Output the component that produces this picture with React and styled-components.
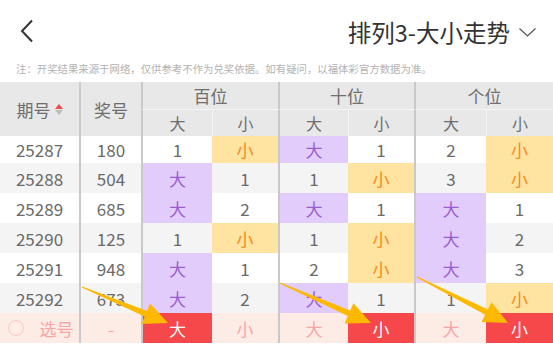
import React from 'react';
import styled, { createGlobalStyle } from 'styled-components';

const GlobalStyle = createGlobalStyle`
  html, body {
    margin: 0;
    padding: 0;
    background: #fff;
  }
  body {
    font-family: 'Noto Sans CJK SC', 'Noto Sans', sans-serif;
    overflow: hidden;
  }
`;

const colors = {
  purpleBg: '#e2ccfb',
  purpleText: '#9a5ccf',
  orangeBg: '#fee4a0',
  orangeText: '#f88a1e',
  redBg: '#f6474b',
  pickBg: '#fdebe6',
  pickText: '#f8a6a4',
  headerBg: '#e8e8e8',
  groupLine: '#c9c9c9',
};

const rows = [
  { no: '25287', num: '180' },
  { no: '25288', num: '504' },
  { no: '25289', num: '685' },
  { no: '25290', num: '125' },
  { no: '25291', num: '948' },
  { no: '25292', num: '673' },
];

// omission counters, precomputed from the draw history
const misses = [
  [[1, null], [null, 1], [2, null]],
  [[null, 1], [1, null], [3, null]],
  [[null, 2], [null, 1], [null, 1]],
  [[1, null], [1, null], [null, 2]],
  [[null, 1], [2, null], [null, 3]],
  [[null, 2], [null, 1], [1, null]],
];

const picks = ['big', 'small', 'small'];

const Page = styled.div`
  width: 553px;
  height: 346px;
  position: relative;
  overflow: hidden;
`;

const NavBar = styled.div`
  height: 56px;
  display: flex;
  align-items: center;
  justify-content: space-between;
  padding: 0 17px 0 20px;
  box-sizing: border-box;
`;

const BackButton = styled.div`
  width: 18px;
  height: 26px;
  display: flex;
  align-items: center;
  margin-top: 5px;
`;

const Title = styled.div`
  display: flex;
  align-items: center;
  gap: 9px;
  font-size: 23.5px;
  color: #333;
  margin-top: 8px;
`;

const Note = styled.div`
  font-size: 10.4px;
  color: #b3b3b3;
  padding-left: 16px;
  height: 26px;
  line-height: 26px;
  white-space: nowrap;
`;

const Table = styled.div`
  display: grid;
  grid-template-columns: 79px 62px 71px 66px 70px 66px 72px 67px;
  grid-template-rows: 28px 26px 27px repeat(6, 30px);
  position: relative;
`;

const HeadCell = styled.div`
  background: ${colors.headerBg};
  color: #6e6e6e;
  font-size: ${p => (p.$sub ? '16px' : '17px')};
  display: flex;
  align-items: center;
  justify-content: center;
  box-sizing: border-box;
  grid-row: ${p => p.$row || 'auto'};
  grid-column: ${p => p.$col || 'auto'};
  border-left: ${p => (p.$group ? `2px solid ${colors.groupLine}` : p.$thin ? '1px solid #f4f4f4' : 'none')};
  border-bottom: ${p => (p.$top ? '1px solid #f4f4f4' : 'none')};
`;

const Cell = styled.div`
  display: flex;
  align-items: center;
  justify-content: center;
  box-sizing: border-box;
  font-size: 17px;
  color: ${p => p.$fg || '#6a6a6a'};
  background: ${p => p.$bg || (p.$odd ? '#f4f4f4' : '#fff')};
  border-left: ${p => (p.$group ? `2px solid ${colors.groupLine}` : 'none')};
  gap: 16px;
`;

const PickCell = styled(Cell)`
  height: 30px;
  align-self: start;
`;

const Circle = styled.span`
  width: 16px;
  height: 16px;
  border-radius: 50%;
  border: 1px solid #f9c8c5;
  box-sizing: border-box;
  display: inline-block;
  margin-left: 2px;
`;

const SortIcon = styled.span`
  display: inline-flex;
  flex-direction: column;
  gap: 1px;
  margin-left: 4px;
  margin-top: 1px;
`;

const Tri = styled.span`
  width: 0;
  height: 0;
  border-left: 4px solid transparent;
  border-right: 4px solid transparent;
  ${p => (p.$up
    ? `border-bottom: 5px solid #f44848;`
    : `border-top: 5px solid #bdbdbd;`)}
`;

const ArrowLayer = styled.svg`
  position: absolute;
  left: 0;
  top: 0;
  pointer-events: none;
`;

const Arrow = ({ x1, y1, x2, y2 }) => {
  const dx = x2 - x1;
  const dy = y2 - y1;
  const len = Math.hypot(dx, dy);
  const ux = dx / len;
  const uy = dy / len;
  const nx = -uy;
  const ny = ux;
  const headLen = 24;
  const headW = 11;
  const bx = x2 - ux * headLen;
  const by = y2 - uy * headLen;
  const pts = [
    [x1 + nx * 0.6, y1 + ny * 0.6],
    [bx + nx * 3, by + ny * 3],
    [bx + nx * headW, by + ny * headW],
    [x2, y2],
    [bx - nx * headW, by - ny * headW],
    [bx - nx * 3, by - ny * 3],
    [x1 - nx * 0.6, y1 - ny * 0.6],
  ];
  return <polygon points={pts.map(p => p.join(',')).join(' ')} fill="#fcb900" />;
};

const bigCell = (val) => (val === null
  ? { text: '大', bg: colors.purpleBg, fg: colors.purpleText }
  : { text: String(val) });
const smallCell = (val) => (val === null
  ? { text: '小', bg: colors.orangeBg, fg: colors.orangeText }
  : { text: String(val) });

export default function App() {
  return (
    <Page>
      <GlobalStyle />
      <NavBar>
        <BackButton>
          <svg width="14" height="24" viewBox="0 0 14 24">
            <path d="M12 1.5 L2 12 L12 22.5" fill="none" stroke="#333" strokeWidth="2" />
          </svg>
        </BackButton>
        <Title>
          排列3-大小走势
          <svg width="17" height="9" viewBox="0 0 17 9">
            <path d="M0.5 0.5 L8.5 8 L16.5 0.5" fill="none" stroke="#555" strokeWidth="1.2" />
          </svg>
        </Title>
      </NavBar>
      <Note>注：开奖结果来源于网络，仅供参考不作为兑奖依据。如有疑问，以福体彩官方数据为准。</Note>
      <Table>
        <HeadCell $row="1 / 3" $col="1">
          期号
          <SortIcon><Tri $up /><Tri /></SortIcon>
        </HeadCell>
        <HeadCell $row="1 / 3" $col="2" $group>奖号</HeadCell>
        <HeadCell $row="1" $col="3 / 5" $group $top>百位</HeadCell>
        <HeadCell $row="1" $col="5 / 7" $group $top>十位</HeadCell>
        <HeadCell $row="1" $col="7 / 9" $group $top>个位</HeadCell>
        {[0, 1, 2].map(g => (
          <React.Fragment key={g}>
            <HeadCell $row="2" $sub $group>大</HeadCell>
            <HeadCell $row="2" $sub $thin>小</HeadCell>
          </React.Fragment>
        ))}

        {rows.map((r, i) => (
          <React.Fragment key={r.no}>
            <Cell $odd={i % 2 === 1}>{r.no}</Cell>
            <Cell $odd={i % 2 === 1} $group>{r.num}</Cell>
            {misses[i].map(([b, s], g) => {
              const bc = bigCell(b);
              const sc = smallCell(s);
              return (
                <React.Fragment key={g}>
                  <Cell $odd={i % 2 === 1} $group $bg={bc.bg} $fg={bc.fg}>{bc.text}</Cell>
                  <Cell $odd={i % 2 === 1} $bg={sc.bg} $fg={sc.fg}>{sc.text}</Cell>
                </React.Fragment>
              );
            })}
          </React.Fragment>
        ))}

        <PickCell $bg={colors.pickBg} $fg={colors.pickText}>
          <Circle />选号
        </PickCell>
        <PickCell $bg={colors.pickBg} $fg={colors.pickText} $group>-</PickCell>
        {picks.map((p, g) => (
          <React.Fragment key={g}>
            <PickCell $group
              $bg={p === 'big' ? colors.redBg : colors.pickBg}
              $fg={p === 'big' ? '#fff' : colors.pickText}>大</PickCell>
            <PickCell
              $bg={p === 'small' ? colors.redBg : colors.pickBg}
              $fg={p === 'small' ? '#fff' : colors.pickText}>小</PickCell>
          </React.Fragment>
        ))}
      </Table>
      <ArrowLayer width="553" height="346" viewBox="0 0 553 346">
        <Arrow x1={82} y1={287} x2={168} y2={323} />
        <Arrow x1={280} y1={283} x2={371} y2={323} />
        <Arrow x1={417} y1={277} x2={508} y2={323} />
      </ArrowLayer>
    </Page>
  );
}
